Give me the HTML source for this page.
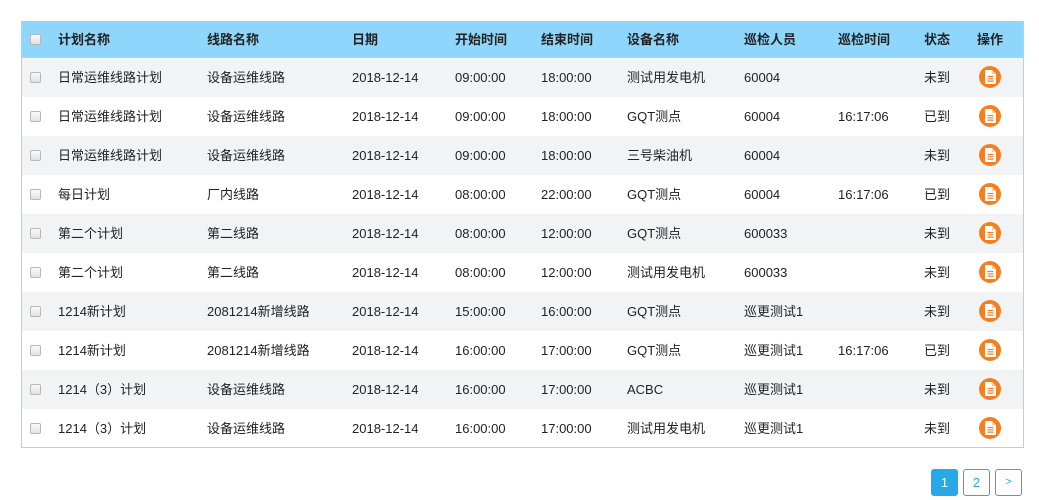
<!DOCTYPE html>
<html><head><meta charset="utf-8"><style>
*{margin:0;padding:0;box-sizing:border-box}
body{width:1039px;height:500px;background:#fff;font-family:"Liberation Sans","Noto Sans CJK SC",sans-serif;font-size:13px;color:#222;position:relative;overflow:hidden}
.tbl{position:absolute;left:21px;top:21px;width:1003px;height:427px;border:1px solid #a8d4f0;border-top:none}
.row{position:absolute;left:0;width:1001px;height:39px}
.row.h{top:0;height:37px;background:#8ed6fb;font-weight:bold;border-bottom:1px solid #ccc}
.row.g{background:#f2f3f5}
.row span{position:absolute;top:0;line-height:39px;white-space:nowrap}
.row.h span{line-height:37px}
.cb{position:absolute;left:8px;top:14px;width:11px;height:11px;border:1px solid #b8b8b8;border-radius:2px;background:linear-gradient(#fafafa,#e2e2e2)}
.row.h .cb{top:13px}
.ic{position:absolute;left:957px;top:8px;width:22px;height:22px;border-radius:50%;background:#f47f20}
.ic svg{position:absolute;left:6px;top:4px}
.pg{position:absolute;top:469px;width:27px;height:27px;border:1px solid #2aa7e8;border-radius:3px;color:#2aa7e8;text-align:center;line-height:25px;font-size:13px}
</style></head><body>
<div class="tbl">
<div class="row h"><div class="cb"></div><span style="left:36px">计划名称</span><span style="left:185px">线路名称</span><span style="left:330px">日期</span><span style="left:433px">开始时间</span><span style="left:519px">结束时间</span><span style="left:605px">设备名称</span><span style="left:722px">巡检人员</span><span style="left:816px">巡检时间</span><span style="left:902px">状态</span><span style="left:955px">操作</span></div>
</div>
<script>
var d=[["日常运维线路计划","设备运维线路","09:00:00","18:00:00","测试用发电机","60004","","未到"],
["日常运维线路计划","设备运维线路","09:00:00","18:00:00","GQT测点","60004","16:17:06","已到"],
["日常运维线路计划","设备运维线路","09:00:00","18:00:00","三号柴油机","60004","","未到"],
["每日计划","厂内线路","08:00:00","22:00:00","GQT测点","60004","16:17:06","已到"],
["第二个计划","第二线路","08:00:00","12:00:00","GQT测点","600033","","未到"],
["第二个计划","第二线路","08:00:00","12:00:00","测试用发电机","600033","","未到"],
["1214新计划","2081214新增线路","15:00:00","16:00:00","GQT测点","巡更测试1","","未到"],
["1214新计划","2081214新增线路","16:00:00","17:00:00","GQT测点","巡更测试1","16:17:06","已到"],
["1214（3）计划","设备运维线路","16:00:00","17:00:00","ACBC","巡更测试1","","未到"],
["1214（3）计划","设备运维线路","16:00:00","17:00:00","测试用发电机","巡更测试1","","未到"]];
var h='';
d.forEach(function(r,i){
h+='<div class="row'+(i%2==0?' g':'')+'" style="top:'+(37+i*39)+'px"><div class="cb"></div><span style="left:36px">'+r[0]+'</span><span style="left:185px">'+r[1]+'</span><span style="left:330px">2018-12-14</span><span style="left:433px">'+r[2]+'</span><span style="left:519px">'+r[3]+'</span><span style="left:605px">'+r[4]+'</span><span style="left:722px">'+r[5]+'</span><span style="left:816px">'+r[6]+'</span><span style="left:902px">'+r[7]+'</span><div class="ic"><svg width="11" height="14" viewBox="0 0 11 14"><path d="M0 0H7L11 4V14H0Z" fill="#fff"/><path d="M7 0V4H11" fill="#f9c9a0"/><path d="M2.5 6.5H8.5M2.5 8.8H8.5M2.5 11.1H8.5" stroke="#f47f20" stroke-width="1.2"/></svg></div></div>';
});
document.querySelector('.tbl').insertAdjacentHTML('beforeend',h);
</script>
<div class="pg" style="left:931px;background:#25a9e9;color:#fff">1</div>
<div class="pg" style="left:963px">2</div>
<div class="pg" style="left:995px;font-size:11px">&gt;</div>
</body></html>
